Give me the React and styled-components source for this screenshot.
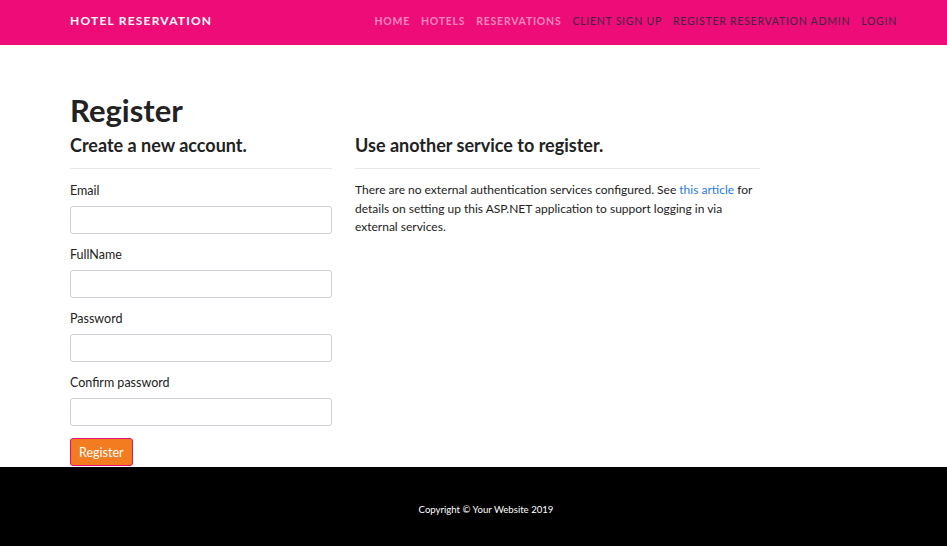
import React from "react";
import styled, { createGlobalStyle } from "styled-components";

const Global = createGlobalStyle`
  html, body { margin: 0; padding: 0; background: #fff; }
  body { font-family: Lato, "Open Sans", sans-serif; color: #222; font-size: 13px; }
  * { box-sizing: border-box; }
`;

const Page = styled.div`
  display: flex;
  flex-direction: column;
  min-height: 546px;
`;

const NavBar = styled.header`
  height: 45px;
  background: #ee0c78;
  display: flex;
  align-items: center;
  justify-content: space-between;
  padding: 0 50px 0 70px;
`;

const Brand = styled.div`
  color: #fff;
  font-weight: 700;
  font-size: 12px;
  letter-spacing: 1.2px;
  text-transform: uppercase;
  margin-top: -4px;
`;

const NavList = styled.nav`
  display: flex;
  gap: 11px;
  margin-top: -4px;
`;

const NavLink = styled.a`
  font-size: 10.5px;
  letter-spacing: 0.75px;
  text-transform: uppercase;
  text-decoration: none;
  font-weight: ${(p) => (p.$light ? 700 : 400)};
  color: ${(p) => (p.$light ? "#f786be" : "#3e2540")};
`;

const Main = styled.main`
  flex: 1;
  padding: 47px 50px 0 70px;
`;

const Title = styled.h1`
  margin: 0;
  font-size: 31px;
  font-weight: 700;
  line-height: 36px;
  color: #222;
`;

const Columns = styled.div`
  display: flex;
  gap: 23px;
  margin-top: 4px;
`;

const Col = styled.section`
  width: ${(p) => p.$w}px;
`;

const SubTitle = styled.h2`
  margin: 0;
  font-size: 18px;
  font-weight: 700;
  line-height: 26px;
  color: #222;
`;

const Rule = styled.hr`
  border: 0;
  border-top: 1px solid #e8e8e8;
  margin: 10px 0 14px;
`;

const Field = styled.div`
  display: flex;
  flex-direction: column;
  gap: 7px;
  margin-bottom: 13px;
`;

const Label = styled.label`
  font-size: 12.5px;
  line-height: 16px;
  color: #222;
`;

const Input = styled.input`
  height: 28px;
  width: 100%;
  border: 1px solid #ccd0d7;
  border-radius: 3px;
  background: #fff;
`;

const Button = styled.button`
  height: 28px;
  padding: 0 8px;
  background: #f47c20;
  color: #fff;
  border: 1px solid #e8106f;
  border-radius: 3px;
  font-family: Lato, sans-serif;
  font-size: 12.5px;
  margin-top: -1px;
`;

const Para = styled.p`
  margin: -2px 0 0;
  font-size: 12px;
  line-height: 18.5px;
  color: #222;
`;

const Link = styled.a`
  color: #2779e6;
  text-decoration: none;
`;

const Footer = styled.footer`
  height: 79px;
  background: #000;
  color: #fff;
  display: flex;
  align-items: center;
  justify-content: center;
  font-size: 9.6px;
  padding-top: 5px;
  padding-left: 25px;
`;

const fields = ["Email", "FullName", "Password", "Confirm password"];

export default function App() {
  return (
    <Page>
      <Global />
      <NavBar>
        <Brand>Hotel Reservation</Brand>
        <NavList>
          <NavLink $light>Home</NavLink>
          <NavLink $light>Hotels</NavLink>
          <NavLink $light>Reservations</NavLink>
          <NavLink>Client Sign Up</NavLink>
          <NavLink>Register Reservation Admin</NavLink>
          <NavLink>Login</NavLink>
        </NavList>
      </NavBar>
      <Main>
        <Title>Register</Title>
        <Columns>
          <Col $w={262}>
            <SubTitle>Create a new account.</SubTitle>
            <Rule />
            {fields.map((f) => (
              <Field key={f}>
                <Label>{f}</Label>
                <Input type={f.toLowerCase().includes("password") ? "password" : "text"} />
              </Field>
            ))}
            <Button>Register</Button>
          </Col>
          <Col $w={405}>
            <SubTitle>Use another service to register.</SubTitle>
            <Rule />
            <Para>
              There are no external authentication services configured. See{" "}
              <Link>this article</Link> for details on setting up this ASP.NET
              application to support logging in via external services.
            </Para>
          </Col>
        </Columns>
      </Main>
      <Footer>Copyright © Your Website 2019</Footer>
    </Page>
  );
}
